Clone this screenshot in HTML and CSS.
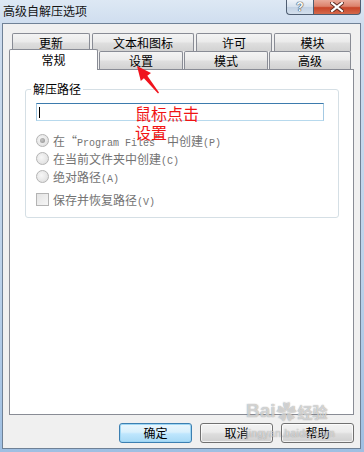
FILE: index.html
```html
<!DOCTYPE html>
<html lang="zh-CN">
<head>
    <meta charset="UTF-8" />
    <title>高级自解压选项</title>
    <link rel="stylesheet" href="styles.css">
</head>
<body>
    <div class="window">
        <div class="titlebar">
            <span class="title">高级自解压选项</span>
            <div class="caption-btns">
                <div class="cap-help">?</div>
                <div class="cap-close">
                    <svg width="14" height="10" viewBox="0 0 14 10">
                        <path d="M2 1 L12 9 M12 1 L2 9" stroke="#5a2a20" stroke-width="4" stroke-linecap="square" />
                        <path d="M2 1 L12 9 M12 1 L2 9" stroke="#fff" stroke-width="2.2" stroke-linecap="square" />
                    </svg>
                </div>
            </div>
        </div>

        <div class="client">
            <div class="tab-row row-back">
                <div class="tab w-78">更新</div>
                <div class="tab w-102">文本和图标</div>
                <div class="tab w-76">许可</div>
                <div class="tab w-77">模块</div>
            </div>
            <div class="tab-row row-front">
                <div class="tab tab-active w-89">常规</div>
                <div class="tab w-84">设置</div>
                <div class="tab w-84">模式</div>
                <div class="tab w-82">高级</div>
            </div>

            <div class="page">
                <fieldset class="group">
                    <legend>解压路径</legend>
                    <div class="textbox"><span class="caret"></span></div>

                    <div class="opt first">
                        <span class="radio checked"></span>
                        <span>在“<span class="lat">Program Files</span>”中创建<span class="lat">(P)</span></span>
                    </div>
                    <div class="opt">
                        <span class="radio"></span>
                        <span>在当前文件夹中创建<span class="lat">(C)</span></span>
                    </div>
                    <div class="opt">
                        <span class="radio"></span>
                        <span>绝对路径<span class="lat">(A)</span></span>
                    </div>
                    <div class="opt check-row">
                        <span class="checkbox"></span>
                        <span>保存并恢复路径<span class="lat">(V)</span></span>
                    </div>
                </fieldset>
            </div>

            <div class="buttons">
                <div class="btn btn-default">确定</div>
                <div class="btn">取消</div>
                <div class="btn">帮助</div>
            </div>
        </div>

        <!-- 注释层 -->
        <svg class="arrow" width="364" height="452" viewBox="0 0 364 452">
            <polygon points="137,66 151,73 147.3,75.8 159,92.6 158,93.4 143.9,78.2 140.8,81" fill="#f0141e" />
        </svg>
        <div class="note">鼠标点击<br>设置</div>

        <div class="watermark">
            <div class="wm-top"><span class="wm-bai">Bai</span><span class="wm-paw">✿</span><span class="wm-jy">经验</span></div>
            <div class="wm-url">jingyan.baidu.com</div>
        </div>
    </div>
</body>
</html>
```

FILE: styles.css
```css
* {
    box-sizing: border-box;
    margin: 0;
    padding: 0;
}
body {
    font-family: "Noto Sans CJK SC", "Liberation Sans", sans-serif;
    font-size: 12px;
    color: #000;
    background: #fff;
}
.window {
    position: relative;
    width: 364px;
    height: 452px;
    padding: 0 3px 3px 2px;
    display: flex;
    flex-direction: column;
    overflow: hidden;
    background: linear-gradient(180deg, #dde8f4 0%, #cddcee 6%, #bcd2ea 60%, #9fbfe2 100%);
}
.titlebar {
    height: 23px;
    display: flex;
    justify-content: space-between;
    align-items: flex-start;
}
.title {
    padding-left: 1px;
    line-height: 21px;
    color: #141414;
}
.caption-btns {
    display: flex;
}
.cap-help,
.cap-close {
    height: 15px;
    display: flex;
    align-items: center;
    justify-content: center;
    border: 1px solid #4f5e72;
    border-top: none;
}
.cap-help {
    width: 27px;
    border-right: none;
    border-radius: 0 0 0 4px;
    background: linear-gradient(180deg, #eef3f9 0%, #d6e1ee 50%, #c3d2e4 51%, #d3dfec 100%);
    font-family: "Liberation Sans", sans-serif;
    font-weight: bold;
    font-size: 12px;
    color: #fff;
    text-shadow: 0 0 1px #33404f, 0 0 1px #33404f, 0 0 1px #33404f;
}
.cap-close {
    width: 48px;
    border-radius: 0 0 4px 0;
    background: linear-gradient(180deg, #e9a999 0%, #dc826c 45%, #c84428 55%, #d46a4c 100%);
}
.client {
    flex: 1;
    display: flex;
    flex-direction: column;
    padding: 9px 6px 0 6px;
    border: 1px solid #6f8196;
    background: #f0f0f0;
}
.tab-row {
    display: flex;
    align-items: flex-end;
    height: 18px;
}
.row-back {
    padding-left: 3px;
    gap: 2px;
}
.row-front {
    gap: 1px;
}
.tab {
    height: 18px;
    border: 1px solid #898c95;
    border-bottom: none;
    border-radius: 2px 2px 0 0;
    background: linear-gradient(180deg, #f4f4f4 0%, #ebebeb 45%, #dedede 55%, #d2d2d2 100%);
    text-align: center;
    line-height: 17px;
}
.tab-active {
    position: relative;
    z-index: 2;
    height: 21px;
    margin-bottom: -1px;
    background: #fff;
    line-height: 19px;
}
.w-76 { width: 76px; }
.w-77 { width: 77px; }
.w-78 { width: 78px; }
.w-82 { width: 82px; }
.w-84 { width: 84px; }
.w-89 { width: 89px; }
.w-102 { width: 102px; }
.page {
    height: 346px;
    border: 1px solid #898c95;
    background: #fff;
}
.group {
    margin: 12px 14px 0 15px;
    padding: 0 14px 9px 10px;
    border: 1px solid #d5dfe5;
    border-radius: 3px;
}
.group legend {
    margin-left: -5px;
    padding: 0 2px;
    line-height: 14px;
    color: #000;
}
.textbox {
    width: 288px;
    height: 18px;
    margin-top: 7px;
    padding: 3px 0 0 2px;
    border: 1px solid;
    border-color: #3d7bad #a4c9e3 #b7d9ed #a4c9e3;
    background: #fff;
}
.caret {
    display: block;
    width: 1px;
    height: 11px;
    background: #000;
}
.opt {
    display: flex;
    align-items: center;
    gap: 4px;
    height: 18px;
    color: #737373;
    white-space: nowrap;
}
.opt.first {
    margin-top: 10px;
}
.opt.check-row {
    margin-top: 5px;
}
.lat {
    font-family: "Liberation Mono", monospace;
    font-size: 10px;
}
.radio {
    position: relative;
    width: 13px;
    height: 13px;
    flex: none;
    border: 1px solid #b4b4b4;
    border-radius: 50%;
    background: radial-gradient(circle at 40% 40%, #f7f7f7 0%, #e6e6e6 60%, #d6d6d6 100%);
}
.radio.checked::after {
    content: '';
    position: absolute;
    left: 3px;
    top: 3px;
    width: 5px;
    height: 5px;
    border-radius: 50%;
    background: radial-gradient(circle at 40% 40%, #c4c4c4, #8e8e8e);
}
.checkbox {
    width: 13px;
    height: 13px;
    flex: none;
    border: 1px solid #b4b4b4;
    background: linear-gradient(135deg, #e4e4e4 0%, #f6f6f6 100%);
}
.buttons {
    display: flex;
    justify-content: flex-end;
    gap: 8px;
    margin-top: 8px;
}
.btn {
    width: 73px;
    height: 20px;
    border: 1px solid #707070;
    border-radius: 3px;
    background: linear-gradient(180deg, #f2f2f2 0%, #ebebeb 45%, #dddddd 55%, #cfcfcf 100%);
    text-align: center;
    line-height: 18px;
    box-shadow: inset 0 0 0 1px rgba(255, 255, 255, 0.7);
}
.btn-default {
    border-color: #3c7fb1;
    background: linear-gradient(180deg, #eaf6fd 0%, #d9f0fc 45%, #bee6fd 55%, #a7d9f5 100%);
    box-shadow: inset 0 0 0 1px #9ed6f4;
}
.arrow {
    position: absolute;
    left: 0;
    top: 0;
    pointer-events: none;
}
.note {
    position: absolute;
    left: 135px;
    top: 104px;
    font-size: 16px;
    line-height: 19px;
    color: #f01414;
}
.watermark {
    position: absolute;
    left: 246px;
    top: 398px;
    color: rgba(255, 255, 255, 0.55);
    text-shadow: 0 0 1px rgba(120, 120, 120, 0.5), 0 0 1px rgba(120, 120, 120, 0.5);
    pointer-events: none;
}
.wm-top {
    display: flex;
    align-items: center;
    height: 26px;
}
.wm-bai {
    font-family: "Liberation Sans", sans-serif;
    font-weight: bold;
    font-size: 19px;
}
.wm-paw {
    font-size: 20px;
    margin: 0 1px;
}
.wm-jy {
    font-size: 15px;
    font-weight: bold;
}
.wm-url {
    font-family: "Liberation Sans", sans-serif;
    font-size: 10px;
    margin-top: 4px;
    letter-spacing: 0.5px;
}
```
